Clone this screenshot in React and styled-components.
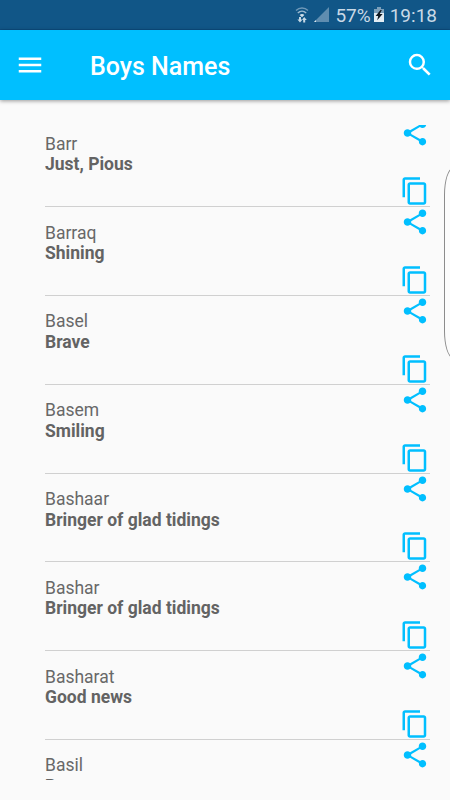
import styled, { createGlobalStyle } from "styled-components"
import { MdMenu, MdSearch, MdShare, MdContentCopy } from "react-icons/md"

const names = [
  { name: "Barr", meaning: "Just, Pious" },
  { name: "Barraq", meaning: "Shining" },
  { name: "Basel", meaning: "Brave" },
  { name: "Basem", meaning: "Smiling" },
  { name: "Bashaar", meaning: "Bringer of glad tidings" },
  { name: "Bashar", meaning: "Bringer of glad tidings" },
  { name: "Basharat", meaning: "Good news" },
  { name: "Basil", meaning: "Brave" },
]

const WifiIcon = () => (
  <svg width="14" height="16" viewBox="0 0 14 16" fill="none">
    <path d="M1 3.6C4.4.2 9.6.2 13 3.6" stroke="#6f98b8" strokeWidth="1.4" />
    <path d="M2.8 6c2.5-2.4 5.9-2.4 8.4 0" stroke="#9dbad0" strokeWidth="1.4" />
    <path d="M4.6 8c1.5-1.4 3.3-1.4 4.8 0L7 10.2z" fill="#d3e0ea" />
    <path d="M4 10v2.6H2.4L5 15.5l2.6-2.9H6V10zM8.2 15.5v-2.6H6.8l2.4-2.9 2.6 2.9h-1.6v2.6z" fill="#c5d7e4" />
  </svg>
)

const SignalIcon = () => (
  <svg width="15" height="15" viewBox="0 0 15 15">
    <path d="M15 0v15H0z" fill="#5f8db0" />
    <path d="M2 13v2H0z" fill="#dbe6ee" />
  </svg>
)

const BatteryIcon = () => (
  <svg width="10" height="15" viewBox="0 0 10 15">
    <path d="M3 0h4v2h3v4H0V2h3z" fill="#7b9fba" />
    <path d="M0 6h10v9H0z" fill="#e3edf4" />
    <path d="M6.5 3 1.6 9h2.6l-1 4.2L8.6 7H5.8l2-4z" fill="#101820" />
  </svg>
)

const NameItem = ({ name, meaning }) => (
  <Row>
    <Details>
      <Name>{name}</Name>
      <Meaning>{meaning}</Meaning>
    </Details>
    <Actions>
      <MdShare />
      <MdContentCopy />
    </Actions>
  </Row>
)

const App = () => {
  return (
    <Screen>
      <GlobalStyle />
      <StatusBar>
        <WifiIcon />
        <SignalIcon />
        <Percent>57%</Percent>
        <BatteryIcon />
        <Clock>19:18</Clock>
      </StatusBar>
      <Toolbar>
        <MdMenu />
        <Title>Boys Names</Title>
        <MdSearch />
      </Toolbar>
      <List>
        {names.map((item) => (
          <NameItem key={item.name} {...item} />
        ))}
      </List>
      <EdgeHandle />
    </Screen>
  )
}

export default App

const GlobalStyle = createGlobalStyle`
*{
  box-sizing:border-box;
}
body{
  margin:0;
  font-family:Roboto, sans-serif;
}
`

const Screen = styled.div`
display:flex;
flex-direction:column;
position:relative;
width:450px;
height:800px;
overflow:hidden;
background-color:#fafafa;
`

const StatusBar = styled.div`
display:flex;
align-items:center;
justify-content:flex-end;
height:30px;
padding:2px 13px 0 0;
background-color:#115687;
border-bottom:1px solid #0c4d80;
color:#c9d9e6;
font-size:19px;

svg{
  flex:none;
  margin:0 5px 2px 0;
}
`

const Percent = styled.span`
margin:0 3px 0 1px;
`

const Clock = styled.span`
margin-left:1px;
`

const Toolbar = styled.header`
display:flex;
align-items:center;
height:70px;
flex:none;
padding:0 15px;
background-color:#00bfff;
color:#fff;
box-shadow:0 1px 4px rgba(0,0,0,0.4);

svg{
  width:30px;
  height:30px;
}
`

const Title = styled.h1`
flex:1;
margin:2px 0 0 45px;
font-size:25px;
font-weight:500;
`

const List = styled.ul`
height:655px;
margin:25px 20px 0 45px;
padding:0;
overflow:hidden;
list-style:none;
`

const Row = styled.li`
display:flex;
justify-content:space-between;
height:88.8px;
border-bottom:1px solid #d0d0d0;

&:first-child{
  margin-top:-6.6px;
}
`

const Details = styled.div`
padding-top:15.4px;
font-size:17.5px;
line-height:20.6px;
`

const Name = styled.div`
color:#686868;
`

const Meaning = styled.div`
color:#636363;
font-weight:700;
`

const Actions = styled.div`
display:flex;
flex-direction:column;
justify-content:space-between;
color:#00bfff;

svg{
  width:30px;
  height:30px;
}
`

const EdgeHandle = styled.div`
position:absolute;
top:168px;
right:-12px;
width:18px;
height:190px;
border:1px solid #8c8c8c;
border-radius:10px / 30px;
background-color:#fcfcfc;
`
